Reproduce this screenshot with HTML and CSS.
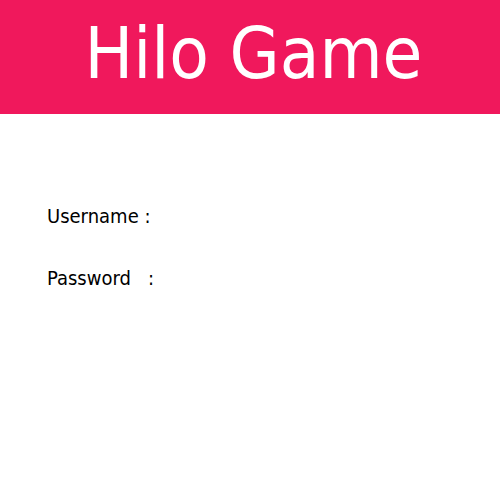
FILE: index.html
```html
<!DOCTYPE html>
<html>
<head>
<meta charset="utf-8">
<link rel="stylesheet" href="styles.css">
</head>
<body>
<header class="header"><h1 class="title">Hilo Game</h1></header>
<main class="form">
  <div class="row">Username :</div>
  <div class="row">Password &nbsp;&nbsp;:</div>
</main>
</body>
</html>
```
FILE: styles.css
```css
html, body {
  margin: 0;
  padding: 0;
  background: #ffffff;
}
body {
  font-family: "DejaVu Sans Condensed", "DejaVu Sans", sans-serif;
  color: #000000;
}
.header {
  background: #f0185c;
  height: 114px;
  box-sizing: border-box;
  padding: 11px 0 0 7px;
  text-align: center;
}
.title {
  margin: 0;
  font-weight: normal;
  font-size: 72px;
  line-height: normal;
  color: #ffffff;
}
.form {
  display: flex;
  flex-direction: column;
  gap: 40px;
  padding: 91px 0 0 47px;
}
.row {
  font-size: 20px;
  line-height: 22px;
}
```
